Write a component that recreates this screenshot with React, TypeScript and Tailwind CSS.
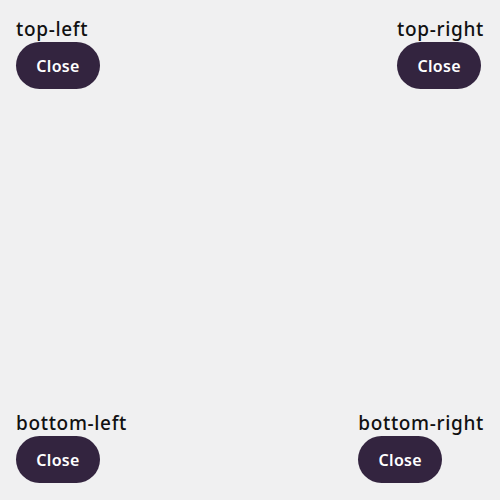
const corners = [
    { label: 'top-left', align: 'items-start' },
    { label: 'top-right', align: 'items-end' },
    { label: 'bottom-left', align: 'items-start' },
    { label: 'bottom-right', align: 'items-end' },
];

function Corner({ label, align }: { label: string; align: string }) {
    return (
        <div className={`flex flex-col ${align}`}>
            <div className="flex flex-col items-start">
                <span className="text-[19px] leading-[26px] font-medium tracking-[0.035em] text-[#111111]">{label}</span>
                <button className="h-[47px] w-[84px] rounded-full bg-[#33243f] text-white text-[16px] font-semibold tracking-[0.02em]">
                    Close
                </button>
            </div>
        </div>
    );
}

export default function App() {
    return (
        <div
            className="h-[500px] w-full bg-[#f0f0f1] px-4 pt-4 pb-[17px] grid grid-cols-2 content-between"
            style={{ fontFamily: '"Noto Sans", "Open Sans", sans-serif' }}
        >
            {corners.map((c) => (
                <Corner key={c.label} label={c.label} align={c.align} />
            ))}
        </div>
    );
}
